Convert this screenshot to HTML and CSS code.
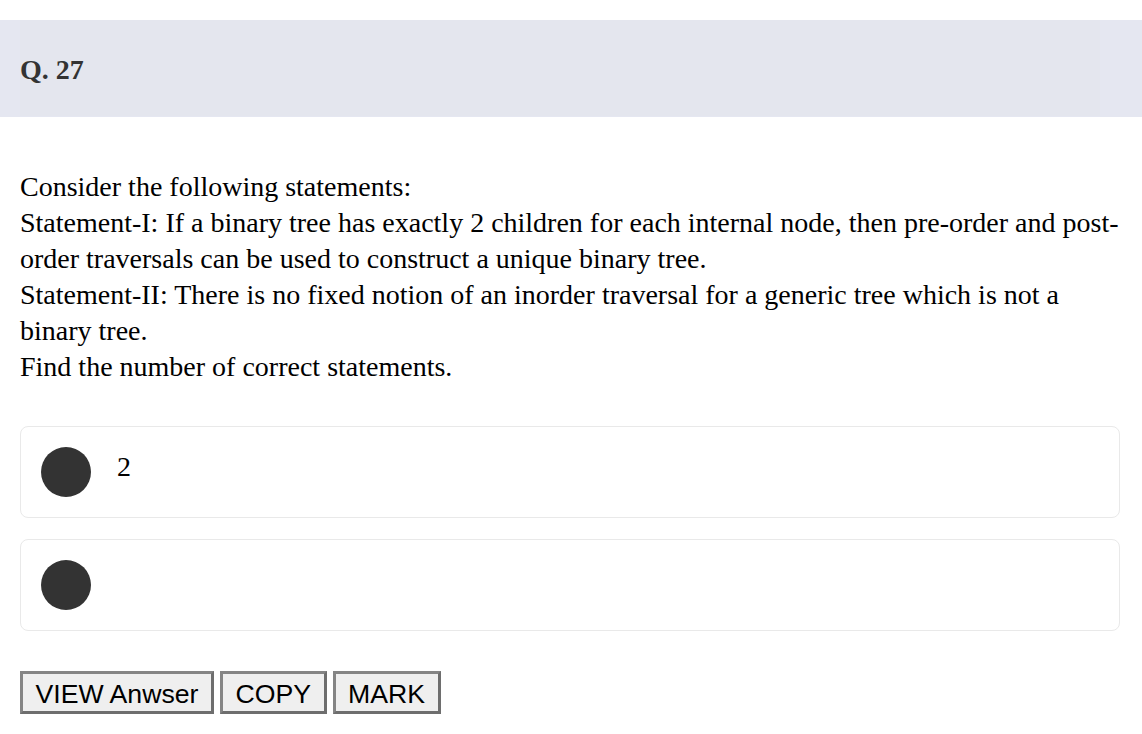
FILE: index.html
```html
<!DOCTYPE html>
<html>
<head>
<meta charset="utf-8">
<link rel="stylesheet" href="styles.css">
</head>
<body>
<div class="page">
  <div class="q-header">
    <div class="q-title">Q. 27</div>
  </div>
  <div class="q-body">
    <p class="q-text">Consider the following statements:<br>Statement-I: If a binary tree has exactly 2 children for each internal node, then pre-order and post-order traversals can be used to construct a unique binary tree.<br>Statement-II: There is no fixed notion of an inorder traversal for a generic tree which is not a binary tree.<br>Find the number of correct statements.</p>
    <div class="options">
      <div class="option"><span class="dot"></span><span class="opt-text">2</span></div>
      <div class="option"><span class="dot"></span><span class="opt-text"></span></div>
    </div>
    <div class="actions">
      <button class="btn">VIEW Anwser</button>
      <button class="btn">COPY</button>
      <button class="btn">MARK</button>
    </div>
  </div>
</div>
</body>
</html>
```
FILE: styles.css
```css
html, body {
  margin: 0;
  padding: 0;
  background: #ffffff;
}
.page {
  padding-top: 20px;
  font-family: "Liberation Serif", "Times New Roman", serif;
  color: #000;
}
.q-header {
  background: #e5e7f1;
  height: 97px;
  padding-left: 20px;
  padding-right: 42px;
}
.q-title {
  background: #e4e6ee;
  height: 92px;
  padding-top: 4px;
  display: flex;
  align-items: center;
  font-weight: bold;
  font-size: 28px;
  color: #333;
}
.q-body {
  padding: 0 22px 0 20px;
}
.q-text {
  margin: 52px 0 0 0;
  font-size: 28px;
  line-height: 36px;
  color: #000;
}
.options {
  margin-top: 41px;
  display: flex;
  flex-direction: column;
  gap: 21px;
}
.option {
  border: 1px solid #e9e9e9;
  border-radius: 8px;
  padding: 20px;
  display: flex;
  align-items: flex-start;
  height: 50px;
}
.dot {
  width: 50px;
  height: 50px;
  border-radius: 50%;
  background: #333333;
  flex: none;
}
.opt-text {
  margin-left: 26px;
  font-size: 28px;
  line-height: 40px;
  color: #000;
}
.actions {
  margin-top: 40px;
  display: flex;
  gap: 6px;
}
.btn {
  font-family: "Liberation Sans", Arial, sans-serif;
  font-size: 26.67px;
  color: #000;
  background: #efefef;
  border-style: solid;
  border-width: 3px;
  border-color: #858585 #6e6e6e #6e6e6e #858585;
  padding: 5px 12.5px 1px;
  line-height: 31px;
  height: 43px;
}
```
